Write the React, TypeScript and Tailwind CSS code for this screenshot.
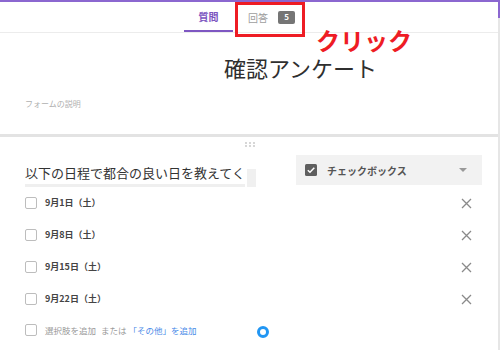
import React from 'react';

const font = { fontFamily: '"Noto Sans CJK JP", "Noto Sans", sans-serif' };

const options = ['9月1日（土）', '9月8日（土）', '9月15日（土）', '9月22日（土）'];

const Box: React.FC = () => (
  <span className="w-[12px] h-[12px] rounded-[2px] border-[1.5px] border-[#bdbdbd] bg-white shrink-0" />
);

const Cross: React.FC = () => (
  <svg width="11" height="11" viewBox="0 0 11 11" className="text-[#8a8a8a]">
    <path d="M1 1L10 10M10 1L1 10" stroke="currentColor" strokeWidth="1.3" />
  </svg>
);

export default function App() {
  return (
    <div className="relative w-[500px] h-[350px] overflow-hidden bg-white" style={font}>
      <div className="flex flex-col h-full border-t-2 border-[#8b67d0] border-r-2 border-r-[#e6e6e6]">
        {/* tab bar */}
        <div className="h-[31px] shrink-0 flex items-end pl-[184px] border-b border-[#ececec]">
          <div className="w-[49px] h-full flex items-center justify-center border-b-2 border-[#7e57c2]">
            <span className="text-[10px] text-[#7b55bf] font-bold">質問</span>
          </div>
          <div className="h-full flex items-center pl-[15px] gap-[10px]">
            <span className="text-[10px] text-[#9e9e9e]">回答</span>
            <span className="w-[17px] h-[13px] rounded-[2px] bg-[#757575] text-white text-[8px] font-bold flex items-center justify-center">5</span>
          </div>
        </div>

        {/* header card */}
        <div className="h-[101px] shrink-0 pl-[25px] pt-[21px] relative">
          <div className="pl-[199px] text-[22px] leading-[26px] text-[#2f2f2f]">確認アンケート</div>
          <div className="mt-[18px] text-[8px] text-[#b0b0b0]">フォームの説明</div>
        </div>

        <div className="h-[3px] shrink-0 bg-[#e3e3e3]" />

        {/* question card */}
        <div className="flex-1 pl-[25px] pr-[16px] relative">
          <div className="flex justify-center pr-[8px] pt-[5px]">
            <svg width="10" height="5" viewBox="0 0 10 5" fill="#c4c4c4">
              <circle cx="1" cy="1" r="0.9" />
              <circle cx="5" cy="1" r="0.9" />
              <circle cx="9" cy="1" r="0.9" />
              <circle cx="1" cy="4" r="0.9" />
              <circle cx="5" cy="4" r="0.9" />
              <circle cx="9" cy="4" r="0.9" />
            </svg>
          </div>
          <div className="flex items-start justify-between mt-[8px]">
            <div className="flex items-end mt-[7px]">
              <div className="text-[13px] leading-[22px] text-[#333] border-b-[3px] border-[#efefef] whitespace-nowrap">
                以下の日程で都合の良い日を教えてく
              </div>
              <div className="w-[9px] h-[18px] bg-[#f0f0f0] ml-[2px]" />
            </div>
            <div className="w-[186px] h-[30px] bg-[#f2f2f2] flex items-center pl-[9px] pr-[15px]">
              <svg width="12" height="12" viewBox="0 0 12 12">
                <rect width="12" height="12" rx="1.5" fill="#5f5f5f" />
                <path d="M2.8 6.2L5 8.3L9.3 3.8" stroke="#fff" strokeWidth="1.5" fill="none" />
              </svg>
              <span className="ml-[10px] text-[10px] text-[#555] font-bold">チェックボックス</span>
              <span className="ml-auto w-0 h-0 border-l-[4px] border-r-[4px] border-t-[4px] border-l-transparent border-r-transparent border-t-[#999]" />
            </div>
          </div>

          <div className="flex flex-col">
            {options.map((o) => (
              <div key={o} className="h-[32px] flex items-center">
                <Box />
                <span className="ml-[8px] text-[9px] text-[#444] font-bold">{o}</span>
                <span className="ml-auto mr-[10px] flex">
                  <Cross />
                </span>
              </div>
            ))}
            <div className="h-[30px] flex items-center">
              <Box />
              <span className="ml-[8px] text-[8.5px] text-[#9a9a9a]">選択肢を追加</span>
              <span className="ml-[5px] text-[8.5px] text-[#9a9a9a]">または</span>
              <span className="ml-[2px] text-[8.5px] text-[#4a8be8]">「その他」を追加</span>
              <span className="ml-[60px] mt-[4px] w-[12px] h-[12px] rounded-full border-[3px] border-[#2196f3]" />
            </div>
          </div>
        </div>
      </div>

      {/* annotation overlays */}
      <div className="absolute top-0 right-0 w-[2px] h-[18px] bg-[#8b67d0]" />
      <div className="absolute left-[235px] top-[2px] w-[70px] h-[35px] border-[3px] border-[#ee1c24]" />
      <div className="absolute left-[316px] top-[28px] text-[24px] leading-[24px] font-bold text-[#ee1c24]">
        クリック
      </div>
    </div>
  );
}
